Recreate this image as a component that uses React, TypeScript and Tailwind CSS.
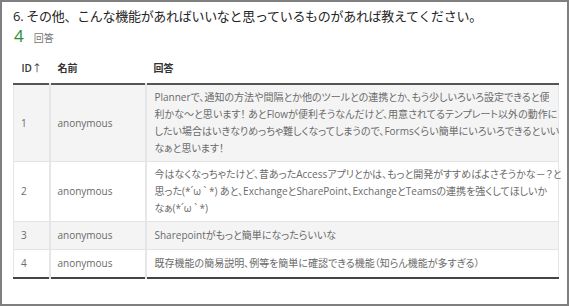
const rows = [
  {
    id: '1',
    name: 'anonymous',
    lines: [
      'Plannerで、通知の方法や間隔とか他のツールとの連携とか、もう少しいろいろ設定できると便',
      '利かな～と思います！ あとFlowが便利そうなんだけど、用意されてるテンプレート以外の動作に',
      'したい場合はいきなりめっちゃ難しくなってしまうので、Formsくらい簡単にいろいろできるといい',
      'なぁと思います！',
    ],
  },
  {
    id: '2',
    name: 'anonymous',
    lines: [
      '今はなくなっちゃたけど、昔あったAccessアプリとかは、もっと開発がすすめばよさそうかな－？と',
      '思った(*´ω ` *) あと、ExchangeとSharePoint、ExchangeとTeamsの連携を強くしてほしいか',
      'なぁ(*´ω ` *)',
    ],
  },
  { id: '3', name: 'anonymous', lines: ['Sharepointがもっと簡単になったらいいな'] },
  {
    id: '4',
    name: 'anonymous',
    lines: ['既存機能の簡易説明、例等を簡単に確認できる機能（知らん機能が多すぎる）'],
  },
];

export default function App() {
  return (
    <div className="w-[569px] h-[306px] border-2 border-[#7f7f7f] bg-white pl-[11px] pr-[8px] font-['Open_Sans','Noto_Sans_CJK_JP',sans-serif] overflow-hidden">
      <h1 className="pt-[4px] text-[13px] leading-[20px] text-[#252525] tracking-[-0.3px]">
        6. その他、こんな機能があればいいなと思っているものがあれば教えてください。
      </h1>
      <div className="flex items-baseline gap-[10px] h-[20px]">
        <span className="text-[17px] leading-[20px] text-[#2c8f2c] pl-[1px]">4</span>
        <span className="text-[10px] text-[#777]">回答</span>
      </div>

      <table className="mt-[11px] w-[546px] border-collapse text-[10px] table-fixed [font-feature-settings:'palt']">
        <colgroup>
          <col className="w-[36px]" />
          <col className="w-[96px]" />
          <col />
        </colgroup>
        <thead>
          <tr className="h-[27px] border-b-2 border-[#555]">
            <th className="pl-[8px] pb-[4px] text-left font-semibold text-[#333]">
              ID<span className="font-normal">↑</span>
            </th>
            <th className="pl-[8px] pb-[4px] text-left font-semibold text-[#333]">名前</th>
            <th className="pl-[8px] pb-[4px] text-left font-semibold text-[#333]">回答</th>
          </tr>
        </thead>
        <tbody className="border-b-2 border-[#444]">
          {rows.map((r, i) => (
            <tr
              key={r.id}
              className={`border-b border-[#e3e3e3] ${i % 2 === 0 ? 'bg-[#f4f4f4]' : 'bg-white'}`}
            >
              <td className="pl-[7px] border-l border-r-2 border-[#e6e6e6] text-[#6a6a6a]">{r.id}</td>
              <td className="pl-[7px] border-r-2 border-[#e6e6e6] text-[#6a6a6a]">{r.name}</td>
              <td className="pl-[8px] py-[4px] h-[28px] border-r border-[#e6e6e6] text-[#6a6a6a] leading-[17px] whitespace-nowrap">
                {r.lines.map((l, j) => (
                  <div key={j}>{l}</div>
                ))}
              </td>
            </tr>
          ))}
        </tbody>
      </table>
    </div>
  );
}
